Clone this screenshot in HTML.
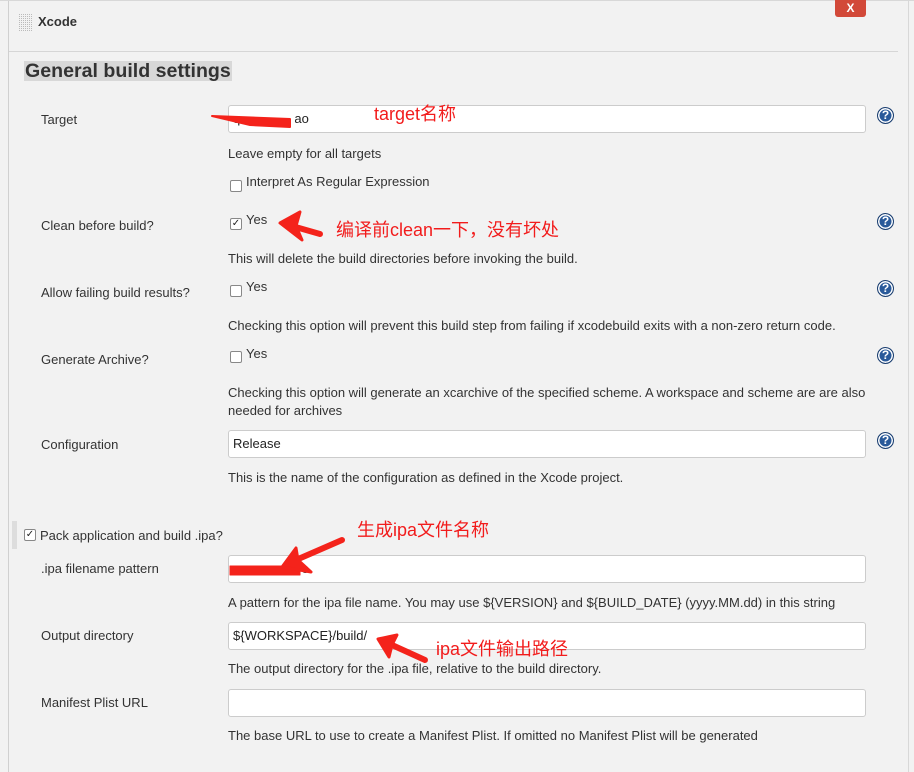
<!DOCTYPE html>
<html><head><meta charset="utf-8"><style>
body{margin:0;width:914px;height:772px;background:#f2f2f2;font-family:"Liberation Sans",Arial,sans-serif;font-size:13px;color:#333;position:relative;overflow:hidden}
.a{position:absolute;white-space:nowrap}
.in{position:absolute;left:228px;width:632px;height:26px;background:#fff;border:1px solid #ccc;border-radius:3px;box-sizing:content-box;font-size:13px;line-height:26px;padding-left:4px;color:#222}
.cb{position:absolute;width:10px;height:10px;border:1px solid #888;border-radius:2px;background:#fff;font-size:10px;line-height:10px;text-align:center;color:#222}
.h{position:absolute;width:15px;height:15px;border-radius:50%;background:#2a5a9a;border:1px solid #1c3f70;color:#fff;font-weight:bold;font-size:12px;line-height:15px;text-align:center;box-shadow:inset 0 0 0 1.5px #fff}
.cn{position:absolute;color:#f21c1c;font-family:"Liberation Sans","Noto Sans CJK SC",sans-serif;font-size:18px;white-space:nowrap}
</style></head><body>
<div class="a" style="left:8px;top:0;width:1px;height:772px;background:#d0d0d0"></div>
<div class="a" style="left:908px;top:0;width:1px;height:772px;background:#d8d8d8"></div>
<div class="a" style="left:0;top:0;width:914px;height:1px;background:#d8d8d8"></div>
<div class="a" style="left:9px;top:51px;width:889px;height:1px;background:#d6d6d6"></div>
<svg class="a" style="left:19px;top:14px" width="13" height="17"><defs><pattern id="d" width="2" height="2" patternUnits="userSpaceOnUse"><rect width="1" height="1" fill="#bbb"/></pattern></defs><rect width="13" height="17" fill="url(#d)"/></svg>
<div class="a" style="left:38px;top:14px;font-weight:bold;font-size:13px">Xcode</div>
<div class="a" style="left:835px;top:0;width:31px;height:17px;background:#d24939;border-radius:0 0 3px 3px;color:#fff;font-weight:bold;text-align:center;line-height:16px;font-size:12px">X</div>
<div class="a" style="left:24px;top:61px;background:#d8d8d8;font-weight:bold;font-size:19.6px;padding:0 1px;line-height:20px;color:#333">General build settings</div>

<div class="a" style="left:41px;top:112px">Target</div>
<div class="in" style="top:105px">q&nbsp;&nbsp;&nbsp;&nbsp;&nbsp;&nbsp;&nbsp;&nbsp;&nbsp;&nbsp;&nbsp;&nbsp;&nbsp;&nbsp;&nbsp;ao</div>
<div class="h" style="left:877px;top:107px">?</div>
<div class="a" style="left:228px;top:146px">Leave empty for all targets</div>
<div class="cb" style="left:230px;top:180px"></div>
<div class="a" style="left:246px;top:174px">Interpret As Regular Expression</div>

<div class="a" style="left:41px;top:218px">Clean before build?</div>
<div class="cb" style="left:230px;top:218px">✓</div>
<div class="a" style="left:246px;top:212px">Yes</div>
<div class="h" style="left:877px;top:213px">?</div>
<div class="a" style="left:228px;top:251px">This will delete the build directories before invoking the build.</div>

<div class="a" style="left:41px;top:285px">Allow failing build results?</div>
<div class="cb" style="left:230px;top:285px"></div>
<div class="a" style="left:246px;top:279px">Yes</div>
<div class="h" style="left:877px;top:280px">?</div>
<div class="a" style="left:228px;top:318px">Checking this option will prevent this build step from failing if xcodebuild exits with a non-zero return code.</div>

<div class="a" style="left:41px;top:352px">Generate Archive?</div>
<div class="cb" style="left:230px;top:351px"></div>
<div class="a" style="left:246px;top:346px">Yes</div>
<div class="h" style="left:877px;top:347px">?</div>
<div class="a" style="left:228px;top:385px">Checking this option will generate an xcarchive of the specified scheme. A workspace and scheme are are also</div>
<div class="a" style="left:228px;top:403px">needed for archives</div>

<div class="a" style="left:41px;top:437px">Configuration</div>
<div class="in" style="top:430px">Release</div>
<div class="h" style="left:877px;top:432px">?</div>
<div class="a" style="left:228px;top:470px">This is the name of the configuration as defined in the Xcode project.</div>

<div class="a" style="left:12px;top:521px;width:5px;height:28px;background:#ddd"></div>
<div class="cb" style="left:24px;top:529px">✓</div>
<div class="a" style="left:40px;top:528px">Pack application and build .ipa?</div>

<div class="a" style="left:41px;top:561px">.ipa filename pattern</div>
<div class="in" style="top:555px">q&nbsp;&nbsp;&nbsp;&nbsp;&nbsp;&nbsp;&nbsp;&nbsp;&nbsp;&nbsp;&nbsp;&nbsp;&nbsp;&nbsp;&nbsp;&nbsp;&nbsp;o</div>
<div class="a" style="left:228px;top:595px">A pattern for the ipa file name. You may use ${VERSION} and ${BUILD_DATE} (yyyy.MM.dd) in this string</div>

<div class="a" style="left:41px;top:628px">Output directory</div>
<div class="in" style="top:622px">${WORKSPACE}/build/</div>
<div class="a" style="left:228px;top:661px">The output directory for the .ipa file, relative to the build directory.</div>

<div class="a" style="left:41px;top:695px">Manifest Plist URL</div>
<div class="in" style="top:689px"></div>
<div class="a" style="left:228px;top:728px">The base URL to use to create a Manifest Plist. If omitted no Manifest Plist will be generated</div>

<svg class="a" style="left:0;top:0" width="914" height="772">
<g fill="#f4231b" stroke="#f4231b" stroke-linecap="round" stroke-linejoin="round">
<path d="M212 116 L290 119 L290 127 L250 125 Z" stroke-width="2"/>
<path d="M230 566 L300 566 L300 575 L230 575 Z" stroke-width="1"/>
<line x1="320" y1="234" x2="292" y2="226" stroke-width="6"/>
<polygon points="280,223 300,212 296,226 302,240" stroke-width="3"/>
<line x1="342" y1="540" x2="296" y2="560" stroke-width="6"/>
<polygon points="282,567 296,548 298,560 311,572" stroke-width="3"/>
<line x1="425" y1="660" x2="392" y2="645" stroke-width="6"/>
<polygon points="378,639 397,635 392,645 389,657" stroke-width="3"/>
</g></svg>
<div class="cn" style="left:374px;top:100px">target名称</div>
<div class="cn" style="left:336px;top:216px">编译前clean一下，没有坏处</div>
<div class="cn" style="left:357px;top:516px">生成ipa文件名称</div>
<div class="cn" style="left:436px;top:635px">ipa文件输出路径</div>
</body></html>
